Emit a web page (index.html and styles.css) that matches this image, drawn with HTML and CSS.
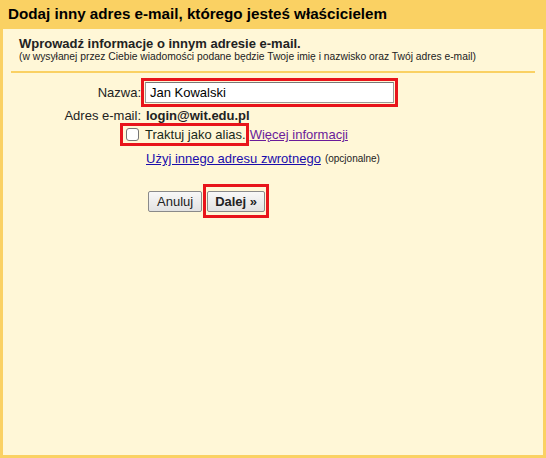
FILE: index.html
```html
<!DOCTYPE html>
<html lang="pl">
<head>
<meta charset="utf-8">
<title>Dodaj inny adres e-mail</title>
<link rel="stylesheet" href="styles.css">
</head>
<body>
<div class="frame">
  <div class="title">Dodaj inny adres e-mail, którego jesteś właścicielem</div>
  <div class="panel">
    <div class="intro">
      <div class="intro-head">Wprowadź informacje o innym adresie e-mail.</div>
      <div class="intro-note">(w wysyłanej przez Ciebie wiadomości podane będzie Twoje imię i nazwisko oraz Twój adres e-mail)</div>
    </div>
    <div class="sep"></div>
    <div class="form">
      <div class="row row-name">
        <div class="label">Nazwa:</div>
        <span class="mark mark-input"><input class="field" type="text" value="Jan Kowalski"></span>
      </div>
      <div class="row row-email">
        <div class="label">Adres e-mail:</div>
        <div class="value">login@wit.edu.pl</div>
      </div>
      <div class="row row-alias">
        <span class="mark mark-alias"><span class="box"></span><span class="alias-text">Traktuj jako alias.</span></span>
        <a class="link visited" href="#">Więcej informacji</a>
      </div>
      <div class="row row-reply">
        <a class="link" href="#">Użyj innego adresu zwrotnego</a>
        <span class="optional">(opcjonalne)</span>
      </div>
      <div class="row row-buttons">
        <button class="btn" type="button">Anuluj</button>
        <span class="mark mark-btn"><button class="btn btn-primary" type="button">Dalej »</button></span>
      </div>
    </div>
  </div>
</div>
</body>
</html>
```

FILE: styles.css
```css
html, body {
  margin: 0;
  padding: 0;
}
body {
  width: 546px;
  height: 458px;
  font-family: Arial, "Liberation Sans", sans-serif;
  color: #222;
}
.frame {
  box-sizing: border-box;
  width: 546px;
  height: 458px;
  background: #fad163;
  padding: 0 3px 3px 3px;
  display: flex;
  flex-direction: column;
}
.title {
  height: 29px;
  box-sizing: border-box;
  padding: 4px 0 0 5px;
  font-size: 15.2px;
  line-height: 20px;
  font-weight: bold;
  color: #000;
}
.panel {
  flex: 1;
  background: #fff7d7;
  display: flex;
  flex-direction: column;
}
.intro {
  padding: 7px 16px 0 16px;
}
.intro-head {
  font-size: 13px;
  line-height: 15px;
  font-weight: bold;
  color: #222;
}
.intro-note {
  font-size: 10.3px;
  line-height: 12px;
  color: #222;
}
.sep {
  height: 2px;
  background: #fad163;
  margin: 8px 8px 0 8px;
}
.form {
  padding-top: 5px;
}
.row {
  display: flex;
  align-items: center;
  font-size: 13px;
}
.label {
  width: 138px;
  text-align: right;
  color: #222;
}
.mark {
  display: inline-flex;
  align-items: center;
  border: 3px solid #e8141b;
  padding: 1px;
}
.field {
  box-sizing: border-box;
  width: 249px;
  height: 21px;
  margin: 0;
  border: 1px solid #999;
  border-top-color: #777;
  padding: 0 4px;
  font-family: Arial, "Liberation Sans", sans-serif;
  font-size: 13px;
  color: #000;
  background: #fff;
  outline: none;
}
.row-email {
  height: 16px;
}
.value {
  margin-left: 5px;
  font-weight: bold;
  color: #222;
}
.row-alias {
  padding-left: 117px;
}
.mark-alias {
  padding: 1px 0 1px 3px;
  height: 15px;
}
.box {
  box-sizing: border-box;
  width: 13px;
  height: 13px;
  border: 1px solid #767676;
  border-radius: 3px;
  background: #fff;
}
.alias-text {
  margin-left: 6px;
  color: #1a2a1a;
}
.link {
  color: #1a0dab;
  text-decoration: underline;
}
.link.visited {
  color: #6a1b9a;
  margin-left: 1px;
}
.row-reply {
  margin-top: 5px;
  padding-left: 143px;
}
.optional {
  font-size: 10px;
  margin-left: 4px;
  color: #222;
}
.row-buttons {
  margin-top: 18px;
  padding-left: 145px;
}
.btn {
  box-sizing: border-box;
  height: 21px;
  margin: 0;
  padding: 0 8px;
  font-family: Arial, "Liberation Sans", sans-serif;
  font-size: 13px;
  color: #222;
  background: linear-gradient(#f8f8f8, #e2e2e2);
  border: 1px solid #8a8a8a;
  border-radius: 2px;
}
.mark-btn {
  margin-left: 1px;
  padding: 4px 1px 3px 1px;
}
.btn-primary {
  font-weight: bold;
  padding: 0 7px;
}
```
